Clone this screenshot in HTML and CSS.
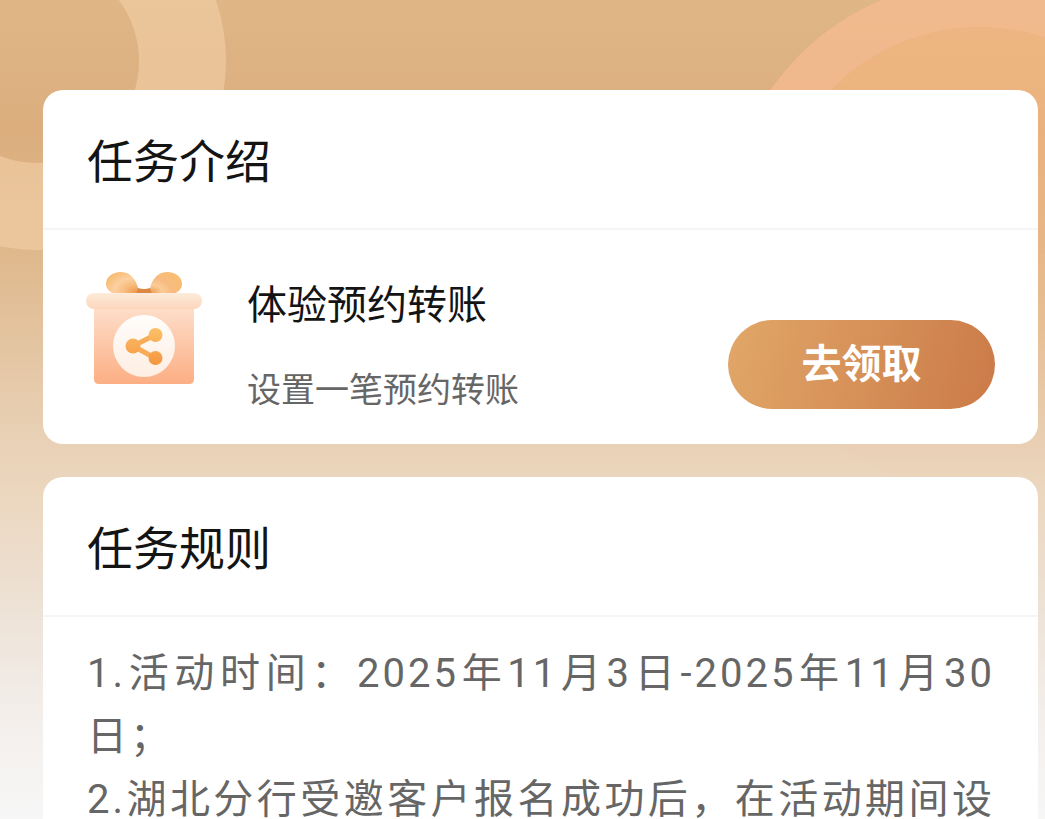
FILE: index.html
```html
<!DOCTYPE html>
<html lang="zh-CN">
<head>
<meta charset="utf-8">
<meta name="viewport" content="width=device-width, initial-scale=1">
<title>任务介绍</title>
<link rel="stylesheet" href="styles.css">
</head>
<body>
<main class="page">
  <div class="ring ring-left"></div>
  <div class="ring ring-right"></div>
  <section class="card">
    <h2 class="card-title">任务介绍</h2>
    <div class="task">
      <svg class="task-icon" viewBox="0 0 116 114" aria-hidden="true">
        <defs>
          <linearGradient id="box" x1="0" y1="0" x2="0" y2="1"><stop offset="0" stop-color="#fddfcb"/><stop offset="1" stop-color="#fcae83"/></linearGradient>
          <linearGradient id="lid" x1="0" y1="0" x2="0" y2="1"><stop offset="0" stop-color="#fdebdb"/><stop offset="1" stop-color="#fcd6bb"/></linearGradient>
          <linearGradient id="disc" x1="0" y1="0" x2="0" y2="1"><stop offset="0" stop-color="#fffdfb"/><stop offset="1" stop-color="#fdeee2"/></linearGradient>
          <radialGradient id="bowl" cx=".9" cy=".9" r="1"><stop offset="0" stop-color="#ee9a50"/><stop offset=".35" stop-color="#f8bd80"/><stop offset=".65" stop-color="#fcd0a0"/><stop offset="1" stop-color="#f8bd78"/></radialGradient>
          <radialGradient id="bowr" cx=".1" cy=".9" r="1"><stop offset="0" stop-color="#f3a35a"/><stop offset=".3" stop-color="#fbcc98"/><stop offset=".6" stop-color="#f7bb80"/><stop offset="1" stop-color="#f9bd74"/></radialGradient>
          <linearGradient id="share" gradientUnits="userSpaceOnUse" x1="0" y1="56" x2="0" y2="93"><stop offset="0" stop-color="#fbc168"/><stop offset="1" stop-color="#f5953f"/></linearGradient>
        </defs>
        <path d="M53 22C52 9 45 0 35 0C26 0 20 5 20 12C20 17 24 20 28 22Z" fill="url(#bowl)"/>
        <path d="M63 22C64 9 71 0 81 0C90 0 96 5 96 12C96 17 92 20 88 22Z" fill="url(#bowr)"/>
        <path d="M52 16Q58 18 64 16L66 22H50Z" fill="#dd8744"/>
        <path d="M8 34H108V107Q108 112 103 112H13Q8 112 8 107Z" fill="url(#box)"/>
        <rect x="0" y="21" width="116" height="16" rx="8" fill="url(#lid)"/>
        <circle cx="58" cy="74" r="31" fill="url(#disc)"/>
        <path d="M69 63L47 74L69 86" fill="none" stroke="#f8ac57" stroke-width="5"/>
        <g fill="url(#share)"><circle cx="69.500" cy="63" r="7"/><circle cx="47" cy="74" r="7.500"/><circle cx="69.500" cy="86" r="7"/></g>
      </svg>
      <div class="task-text">
        <h3 class="task-name">体验预约转账</h3>
        <p class="task-desc">设置一笔预约转账</p>
      </div>
      <button class="claim" type="button">去领取</button>
    </div>
  </section>
  <section class="card">
    <h2 class="card-title">任务规则</h2>
    <div class="rules">
      <p>1.活动时间：2025年11月3日-2025年11月30日；</p>
      <p>2.湖北分行受邀客户报名成功后，在活动期间设</p>
    </div>
  </section>
</main>
</body>
</html>
```
FILE: styles.css
```css
* {
  box-sizing: border-box;
}

body {
  margin: 0;
  font-family: Roboto, "Noto Sans CJK SC", sans-serif;
  color: #141414;
}

h2, h3, p {
  margin: 0;
  font-weight: 400;
}

.page {
  position: relative;
  display: flex;
  flex-direction: column;
  gap: 33px;
  height: 100vh;
  padding: 90px 7px 0 43px;
  overflow: hidden;
  background: linear-gradient(#dfb686 0, #dcae7e 130px, #dfb88c 250px, #e8d0b4 430px, #ecd7c0 500px, #ede2d6 610px, #f3eeea 710px, #f7f7f7 819px);
}

.ring {
  position: absolute;
  border-radius: 50%;
}

.ring-left {
  top: -128px;
  left: -152px;
  width: 378px;
  height: 378px;
  border: 87px solid rgba(248, 213, 176, 0.5);
}

.ring-right {
  top: -20px;
  left: 725px;
  width: 510px;
  height: 510px;
  background: rgba(246, 182, 126, 0.6) padding-box;
  border: 47px solid rgba(248, 188, 146, 0.7);
  mask-image: linear-gradient(#000 20%, transparent 98%);
}

.card {
  position: relative;
  flex: none;
  border-radius: 20px;
  background: #fff;
}

.card-title {
  padding: 40px 44px 34px;
  border-bottom: 2px solid #f5f5f5;
  font-size: 46px;
  line-height: 64px;
}

.task {
  display: flex;
  align-items: flex-start;
  padding: 42px 43px 30px;
}

.task-icon {
  flex: none;
  width: 116px;
  height: 114px;
}

.task-text {
  flex: 1;
  margin-left: 45px;
}

.task-name {
  margin-top: 6px;
  font-size: 40px;
  line-height: 56px;
}

.task-desc {
  margin-top: 32px;
  color: #666;
  font-size: 34px;
  line-height: 48px;
}

.claim {
  width: 267px;
  height: 89px;
  margin-top: 48px;
  padding: 0 0 8px;
  border: 0;
  border-radius: 45px;
  background: linear-gradient(105deg, #e1a768, #cb7a48);
  color: #fff;
  font: inherit;
  font-size: 40px;
  font-weight: 700;
}

.rules {
  padding: 25px 43px 40px 44px;
  color: #666;
  font-size: 40px;
  line-height: 63px;
  letter-spacing: 3px;
  text-align: justify;
  text-align-last: left;
}

.rules p:last-child {
  text-align-last: justify;
}
```
